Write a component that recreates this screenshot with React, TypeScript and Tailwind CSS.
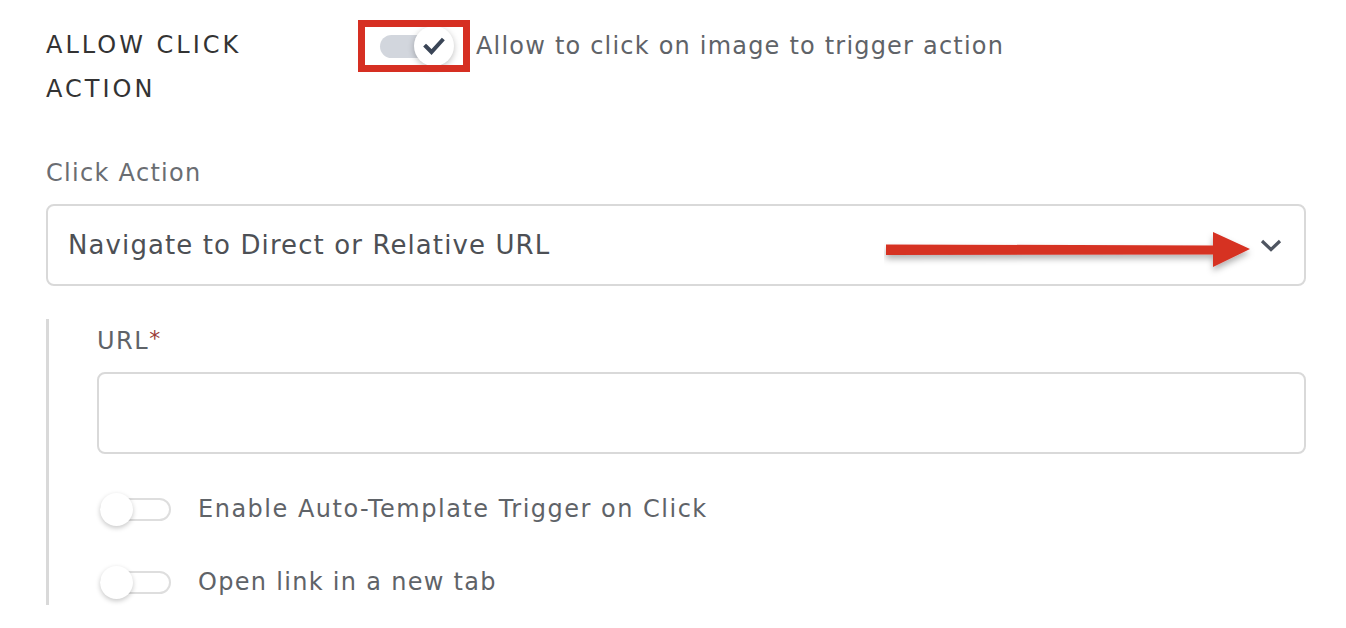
import { useState } from "react";

const font = { fontFamily: '"DejaVu Sans", "Liberation Sans", sans-serif' };

function OffSwitch() {
  return (
    <div className="relative w-[71px] h-[33px] flex items-center shrink-0">
      <div className="w-[71px] h-[23px] rounded-full border-2 border-[#dedede] bg-white" />
      <div className="absolute left-0 top-0 w-[33px] h-[33px] rounded-full bg-white shadow-[0_2px_5px_rgba(0,0,0,0.22)]" />
    </div>
  );
}

function ArrowMark() {
  return (
    <svg width="380" height="50" viewBox="0 0 380 50" className="absolute left-[836px] top-[24px] pointer-events-none">
      <defs>
        <filter id="sh" x="-5%" y="-40%" width="110%" height="200%">
          <feDropShadow dx="0" dy="4" stdDeviation="3" floodColor="#000" floodOpacity="0.3" />
        </filter>
      </defs>
      <polygon points="2,14.5 329,15.5 329,2 366,19 329,37 329,24.5 2,25" fill="#d63024" filter="url(#sh)" />
    </svg>
  );
}

export default function App() {
  const [allow, setAllow] = useState(true);

  return (
    <div className="w-[1346px] h-[628px] bg-white pl-[46px] pr-[40px] text-[#5f6368] overflow-hidden" style={font}>
      <div className="flex items-start pt-[20px]">
        <div className="w-[260px] text-[24px] leading-[44px] text-[#333333] tracking-[3px] pt-[3px]">
          ALLOW CLICK ACTION
        </div>
        <div className="relative ml-[52px] w-[112px] h-[52px] flex items-center shrink-0">
          <button
            onClick={() => setAllow(!allow)}
            className="relative ml-[22px] w-[72px] h-[40px] flex items-center"
          >
            <div className="w-[66px] h-[23px] rounded-full bg-[#d2d6dd]" />
            <div className="absolute left-[34px] top-0 w-[40px] h-[40px] rounded-full bg-white shadow-[0_2px_6px_rgba(0,0,0,0.25)] flex items-center justify-center">
              <svg width="22" height="18" viewBox="0 0 22 18">
                <path d="M3 9.5 L8.5 15 L19 3.5" fill="none" stroke="#3a4556" strokeWidth="4" strokeLinecap="square" />
              </svg>
            </div>
          </button>
          <div className="absolute inset-0 border-[7px] border-[#d62f22] pointer-events-none" />
        </div>
        <div className="ml-[6px] text-[24px] leading-[52px] tracking-[1.2px]">Allow to click on image to trigger action</div>
      </div>

      <div className="mt-[46px] text-[24px] leading-[32px] text-[#6a6d72] tracking-[1.3px]">Click Action</div>

      <div className="relative mt-[15px] h-[82px] rounded-lg border-2 border-[#d9d9d9] flex items-center justify-between pl-[20px] pr-[22px]">
        <span className="text-[26px] text-[#4d5055] tracking-[1.1px]">Navigate to Direct or Relative URL</span>
        <svg width="22" height="13" viewBox="0 0 22 13">
          <path d="M2 2 L11 10.5 L20 2" fill="none" stroke="#4f5561" strokeWidth="3.2" />
        </svg>
        <ArrowMark />
      </div>

      <div className="mt-[33px] border-l-[3px] border-[#d9d9d9] pl-[48px] pb-[6px]">
        <div className="text-[24px] leading-[44px] tracking-[1.5px]">
          URL<span className="text-[#9a3b37] text-[22px] align-top relative -top-[2px]">*</span>
        </div>
        <div className="mt-[9px] h-[82px] rounded-lg border-2 border-[#d9d9d9]" />
        <div className="mt-[39px] flex flex-col gap-[40px] pl-[3px]">
          <div className="flex items-center gap-[27px]">
            <OffSwitch />
            <span className="text-[24px] leading-[33px] tracking-[1.5px]">Enable Auto-Template Trigger on Click</span>
          </div>
          <div className="flex items-center gap-[27px]">
            <OffSwitch />
            <span className="text-[24px] leading-[33px] tracking-[1.3px]">Open link in a new tab</span>
          </div>
        </div>
      </div>
    </div>
  );
}
